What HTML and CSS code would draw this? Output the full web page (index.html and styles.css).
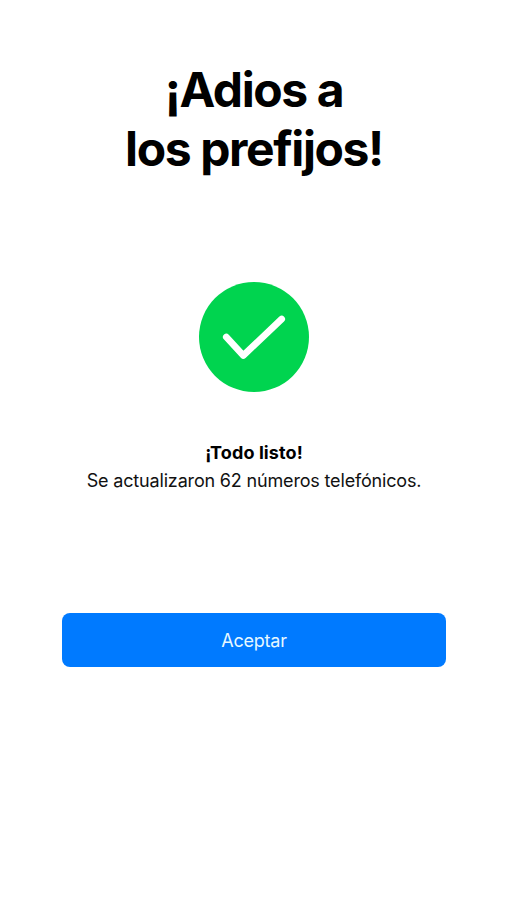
FILE: index.html
```html
<!DOCTYPE html>
<html lang="es">
<head>
  <meta charset="UTF-8">
  <meta name="viewport" content="width=device-width, initial-scale=1.0">
  <title>¡Adios a los prefijos!</title>
  <link rel="stylesheet" href="styles.css">
</head>
<body>
  <main class="screen">
    <h1 class="title">¡Adios a<br>los prefijos!</h1>

    <svg class="check" viewBox="0 0 110 110" aria-hidden="true">
      <circle cx="55" cy="55" r="55" fill="#00d44f"/>
      <path d="M27.3 55 L44.3 73.5 L82.7 37" fill="none" stroke="#fff" stroke-width="6.7" stroke-linecap="round" stroke-linejoin="round"/>
    </svg>

    <div class="message">
      <p class="message-title">¡Todo listo!</p>
      <p class="message-text">Se actualizaron 62 números telefónicos.</p>
    </div>

    <button class="accept" type="button">Aceptar</button>
  </main>
</body>
</html>
```
FILE: styles.css
```css
body {
  font-family: Inter, sans-serif;
  background-color: #fff;
  color: #000;
  margin: 0;
}
.screen {
  display: flex;
  flex-direction: column;
  align-items: center;
  box-sizing: border-box;
  min-height: 100vh;
  padding: 60px 61px 0 62px;
  text-align: center;
}
.title {
  margin: 0;
  font-size: 48px;
  line-height: 59px;
  font-weight: 700;
  letter-spacing: -1.4px;
  white-space: nowrap;
}
.check {
  width: 110px;
  height: 110px;
  margin-top: 104px;
}
.message {
  margin-top: 47px;
  color: #111;
  font-size: 18px;
  line-height: 28px;
  white-space: nowrap;
}
.message p {
  margin: 0;
}
.message .message-title {
  color: #000;
  font-weight: 700;
  letter-spacing: 0.1px;
}
.message-text {
  letter-spacing: -0.17px;
}
.accept {
  width: 100%;
  height: 54px;
  margin-top: 118px;
  padding: 0;
  border: none;
  border-radius: 8px;
  background-color: #007aff;
  color: #e6f8ff;
  font-family: inherit;
  font-size: 18px;
  letter-spacing: -0.2px;
}
```
